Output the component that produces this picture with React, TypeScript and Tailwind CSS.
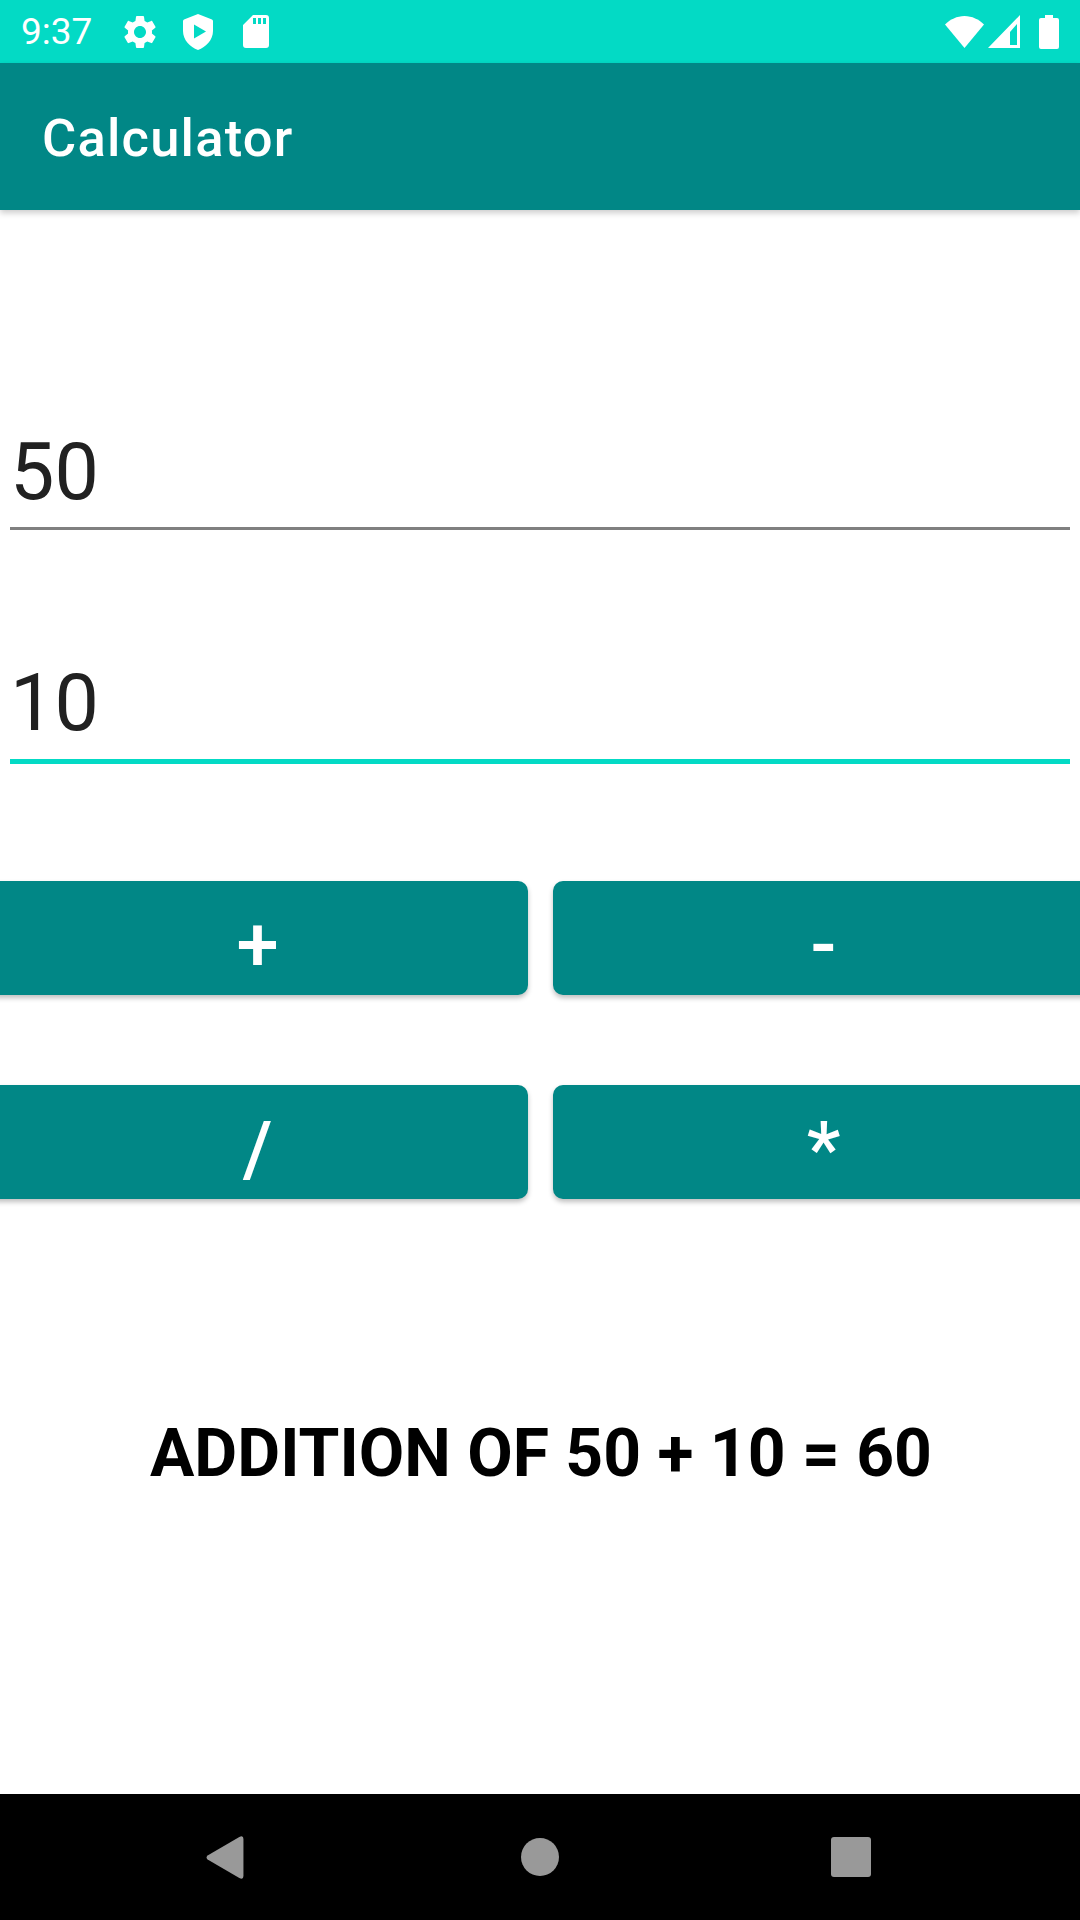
const roboto = "font-['Roboto',sans-serif]";

function Btn({ label }: { label: string }) {
  return (
    <div className="flex h-[114px] w-[541px] shrink-0 items-center justify-center rounded-[10px] bg-[#018786] pt-[14px] text-[76px] font-medium leading-none text-white shadow-[0_3px_5px_rgba(0,0,0,0.25)]">
      {label}
    </div>
  );
}

export default function App() {
  return (
    <div className={`flex h-[1920px] w-[1080px] flex-col overflow-hidden bg-white ${roboto}`}>
      <div className="flex h-[63px] shrink-0 items-center bg-[#03DAC5] pl-[21px] pr-[21px] text-white">
        <span className="w-[103px] text-[37px] leading-none">9:37</span>
        <svg width="40" height="40" viewBox="0 0 24 24" fill="#fff" className="ml-[-4px]">
          <path d="M19.14 12.94c.04-.3.06-.61.06-.94 0-.32-.02-.64-.07-.94l2.03-1.58c.18-.14.23-.41.12-.61l-1.92-3.32c-.12-.22-.37-.29-.59-.22l-2.39.96c-.5-.38-1.03-.7-1.62-.94l-.36-2.54c-.04-.24-.24-.41-.48-.41h-3.84c-.24 0-.43.17-.47.41l-.36 2.54c-.59.24-1.13.57-1.62.94l-2.39-.96c-.22-.08-.47 0-.59.22L2.74 8.87c-.12.21-.08.47.12.61l2.03 1.58c-.05.3-.09.63-.09.94s.02.64.07.94l-2.03 1.58c-.18.14-.23.41-.12.61l1.92 3.32c.12.22.37.29.59.22l2.39-.96c.5.38 1.03.7 1.62.94l.36 2.54c.05.24.24.41.48.41h3.84c.24 0 .44-.17.47-.41l.36-2.54c.59-.24 1.13-.56 1.62-.94l2.39.96c.22.08.47 0 .59-.22l1.92-3.32c.12-.22.07-.47-.12-.61l-2.01-1.58zM12 15.6c-1.98 0-3.6-1.62-3.6-3.6s1.62-3.6 3.6-3.6 3.6 1.62 3.6 3.6-1.62 3.6-3.6 3.6z" />
        </svg>
        <svg width="30" height="36" viewBox="0 0 30 36" fill="#fff" className="ml-[23px]">
          <path fillRule="evenodd" d="M15 0 L29 5.5 Q30 6 30 7 V17 C30 26 23 33 15 36 C7 33 0 26 0 17 V7 Q0 6 1 5.5 Z M11 10.5 V24.5 L23 17.5 Z" />
        </svg>
        <svg width="26" height="33" viewBox="0 0 26 33" fill="#fff" className="ml-[30px]">
          <path fillRule="evenodd" d="M10 0 H23 Q26 0 26 3 V30 Q26 33 23 33 H3 Q0 33 0 30 V10 Z M10 3 V9 H13 V3 Z M15 3 V9 H18 V3 Z M20 3 V9 H23 V3 Z" />
        </svg>
        <div className="flex-1" />
        <svg width="39" height="32" viewBox="0 0 39 32" fill="#fff">
          <path d="M19.5 32 L0 8.5 C5 3.5 12 0 19.5 0 C27 0 34 3.5 39 8.5 Z" />
        </svg>
        <svg width="32" height="33" viewBox="0 0 32 33" fill="#fff" className="ml-[4px]">
          <path fillRule="evenodd" d="M32 0 V33 H0 Z M29 9 L22 17 V30 H29 Z" />
        </svg>
        <svg width="20" height="34" viewBox="0 0 20 34" fill="#fff" className="ml-[19px]">
          <path d="M6 0 H14 V3 H18 Q20 3 20 5 V32 Q20 34 18 34 H2 Q0 34 0 32 V5 Q0 3 2 3 H6 Z" />
        </svg>
      </div>

      <div className="z-10 flex h-[147px] shrink-0 items-center bg-[#018786] pl-[42px] pt-[3px] text-[52.5px] font-medium tracking-[1.2px] text-white shadow-[0_3px_6px_rgba(0,0,0,0.2)]">
        Calculator
      </div>

      <div className="flex flex-1 flex-col">
        <div className="mx-[10px] mt-[211px] h-[109px] border-b-[3px] border-[#808080] pt-[5px] text-[79px] leading-[92px] text-[#212121]">
          50
        </div>
        <div className="mx-[10px] mt-[121px] h-[113px] border-b-[5px] border-[#03DAC5] pt-[6px] text-[79px] leading-[92px] text-[#212121]">
          10
        </div>

        <div className="mt-[117px] ml-[-13px] flex gap-[25px]">
          <Btn label="+" />
          <Btn label="-" />
        </div>
        <div className="mt-[90px] ml-[-13px] flex gap-[25px]">
          <Btn label="/" />
          <Btn label="*" />
        </div>

        <div className="mt-[216px] pl-[2px] text-center text-[66px] font-bold leading-[78px] text-black">
          ADDITION OF 50 + 10 = 60
        </div>
      </div>

      <div className="flex h-[126px] shrink-0 items-center justify-center bg-black pr-[3px]">
        <svg width="38" height="43" viewBox="0 0 36 42" fill="#999">
          <path d="M1 19 L32 1 Q36 -1 36 3 V39 Q36 43 32 41 L1 23 Q-1 21 1 19 Z" />
        </svg>
        <div className="ml-[277px] h-[38px] w-[38px] rounded-full bg-[#999]" />
        <div className="ml-[272px] h-[40px] w-[40px] rounded-[3px] bg-[#999]" />
      </div>
    </div>
  );
}
